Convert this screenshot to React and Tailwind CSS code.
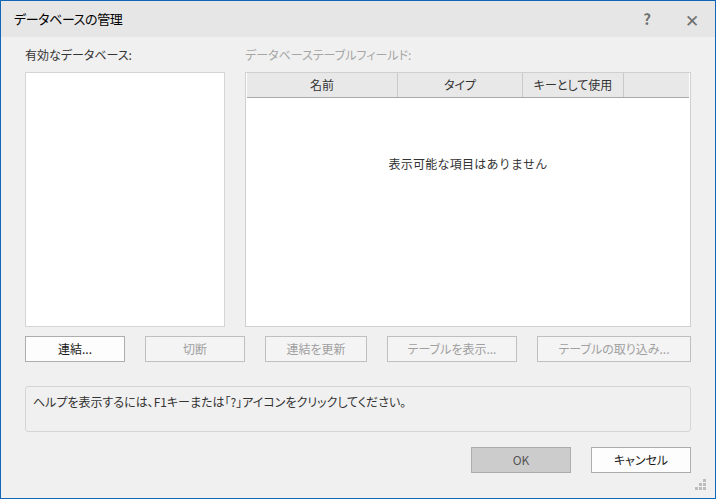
import React from 'react'

const font = { fontFamily: '"Noto Sans CJK JP", "Noto Sans", sans-serif' }

function Btn({ children, width, disabled, primary }) {
  let cls = 'border-[#adadad] bg-[#fdfdfd] text-[#1a1a1a]'
  if (disabled) cls = 'border-[#bfbfbf] bg-[#f4f4f4] text-[#a0a0a0]'
  else if (primary) cls = 'border-[#adadad] bg-[#cccccc] text-[#555]'
  return (
    <div className={`flex h-[26px] shrink-0 items-center justify-center border text-[12px] leading-none ${cls} ${width}`}>
      {children}
    </div>
  )
}

export default function App() {
  return (
    <div style={font} className="relative flex h-[499px] w-[716px] flex-col border border-[#1166b5] bg-[#f0f0f0] [font-feature-settings:'palt']">
      {/* title bar */}
      <div className="flex h-[36px] shrink-0 items-center bg-[#e6e6e6] pl-[13px] pr-[16px]">
        <span className="text-[13px] tracking-[-0.4px] text-black">データベースの管理</span>
        <span className="ml-auto text-[15px] font-bold text-[#707070]">?</span>
        <span className="ml-[34px] text-[17px] leading-none text-[#707070]">✕</span>
      </div>

      <div className="flex flex-col px-[24px]">
        <div className="mt-[10px] flex gap-[20px]">
          <div className="flex w-[200px] flex-col">
            <div className="h-[16px] text-[12px] leading-[16px] text-[#333]">有効なデータベース:</div>
            <div className="mt-[9px] h-[255px] border border-[#d5d5d5] bg-white"></div>
          </div>
          <div className="flex w-[446px] flex-col">
            <div className="h-[16px] text-[12px] leading-[16px] text-[#a6a6a6]">データベーステーブルフィールド:</div>
            <div className="mt-[9px] flex h-[255px] flex-col border border-[#d0d0d0] bg-white">
              <div className="mx-[1px] flex h-[25px] border-b border-[#a8a8a8] bg-[#e8e8e8] text-[12px] text-[#333]">
                <div className="flex w-[151px] items-center justify-center border-r border-[#c9c9c9]">名前</div>
                <div className="flex w-[125px] items-center justify-center border-r border-[#c9c9c9]">タイプ</div>
                <div className="flex w-[101px] items-center justify-center border-r border-[#c9c9c9]">キーとして使用</div>
                <div className="flex-1"></div>
              </div>
              <div className="pt-[57px] text-center text-[12px] tracking-[0.25px] text-[#333] [font-feature-settings:normal]">
                表示可能な項目はありません
              </div>
            </div>
          </div>
        </div>

        <div className="mt-[9px] flex gap-[20px]">
          <Btn width="w-[100px]">連結...</Btn>
          <Btn width="w-[100px]" disabled>切断</Btn>
          <Btn width="w-[102px]" disabled>連結を更新</Btn>
          <Btn width="w-[130px]" disabled>テーブルを表示...</Btn>
          <Btn width="w-[154px]" disabled>テーブルの取り込み...</Btn>
        </div>

        <div className="mt-[24px] h-[46px] rounded-[3px] border border-[#d5d5d5] bg-[#f0f0f0] px-[7px] pt-[7px] text-[12px] leading-[16px] text-[#333]">
          ヘルプを表示するには、F1キーまたは「?」アイコンをクリックしてください。
        </div>

        <div className="mt-[15px] flex justify-end gap-[20px]">
          <Btn width="w-[100px]" primary>OK</Btn>
          <Btn width="w-[100px]">キャンセル</Btn>
        </div>
      </div>

      <svg className="absolute bottom-[7px] right-[8px]" width="12" height="12" viewBox="0 0 12 12">
        <g fill="#bdbdbd">
          <rect x="8" y="0" width="3" height="3" />
          <rect x="4" y="4" width="3" height="3" />
          <rect x="8" y="4" width="3" height="3" />
          <rect x="0" y="8" width="3" height="3" />
          <rect x="4" y="8" width="3" height="3" />
          <rect x="8" y="8" width="3" height="3" />
        </g>
      </svg>
    </div>
  )
}
